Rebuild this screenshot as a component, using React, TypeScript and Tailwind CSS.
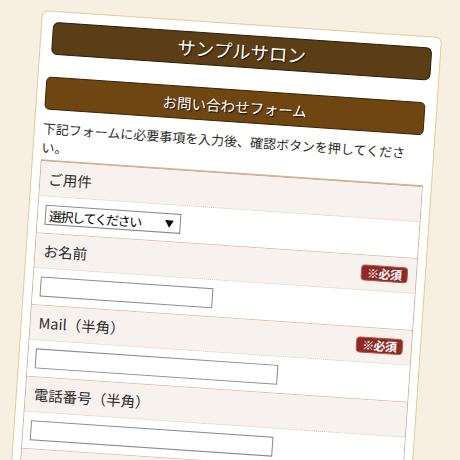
import React from "react";

type Field = {
  label: string;
  required?: boolean;
  kind: "select" | "text";
  width?: string;
};

const fields: Field[] = [
  { label: "ご用件", kind: "select" },
  { label: "お名前", required: true, kind: "text", width: "w-[173px]" },
  { label: "Mail（半角）", required: true, kind: "text", width: "w-[243px]" },
  { label: "電話番号（半角）", kind: "text", width: "w-[243px]" },
  { label: "ご住所", kind: "text", width: "w-[300px]" },
];

function Required() {
  return (
    <span className="flex h-[16px] w-[47px] items-center justify-center rounded-[4px] border border-[#b4574f] bg-[#8e2a24] text-[12px] font-bold leading-none tracking-[-0.5px] text-white">
      ※必須
    </span>
  );
}

function FieldRow({ field }: { field: Field }) {
  return (
    <>
      <div className="flex h-[35px] items-center justify-between border-b border-dotted border-[#dccbb9] bg-[#f7f2ee] pl-2 pr-2">
        <span className="text-[14.5px] text-[#2b2b2b]">{field.label}</span>
        {field.required && <Required />}
      </div>
      <div className="border-b border-[#dcc3aa] bg-white py-2 pl-[7px]">
        {field.kind === "select" ? (
          <div className="flex h-[20px] w-[136px] items-center justify-between border border-[#888] bg-white pl-[3px] pr-[6px] text-[13px] leading-none tracking-[-1.4px] text-black">
            <span>選択してください</span>
            <span className="text-[9px] tracking-normal">▼</span>
          </div>
        ) : (
          <input
            type="text"
            className={`block h-[20px] border border-[#8a8a8a] bg-white ${field.width}`}
          />
        )}
      </div>
    </>
  );
}

export default function App() {
  return (
    <div
      className="h-[460px] w-[460px] overflow-hidden bg-[#f7efe1] pl-[42px] pt-[10px]"
      style={{ fontFamily: '"Noto Sans CJK JP", "Noto Sans", sans-serif' }}
    >
      <div className="w-[401px] origin-top-left rotate-[3.9deg] rounded-md border border-[#e4cb94] bg-white px-2 pb-6 pt-[10px]">
        <div className="ml-[3px] flex h-[33px] items-center justify-center rounded-[6px] border border-[#2e1d07] bg-[#5b3e16] text-[18.5px] text-white [text-shadow:1px_1px_1px_#1a0f02]">
          サンプルサロン
        </div>
        <div className="mr-[3px] mt-[22px] flex h-[33px] items-center justify-center rounded-[5px] border border-[#3a2405] bg-[#6f4512] text-[14.5px] text-white [text-shadow:1px_1px_1px_#1a0f02]">
          お問い合わせフォーム
        </div>
        <p className="mt-[9px] pr-[10px] text-[13px] leading-[19px] text-[#2b2b2b]">
          下記フォームに必要事項を入力後、確認ボタンを押してください。
        </p>
        <div className="mt-[3px] border border-t-2 border-[#d2b293]">
          {fields.map((f) => (
            <FieldRow key={f.label} field={f} />
          ))}
        </div>
      </div>
    </div>
  );
}
